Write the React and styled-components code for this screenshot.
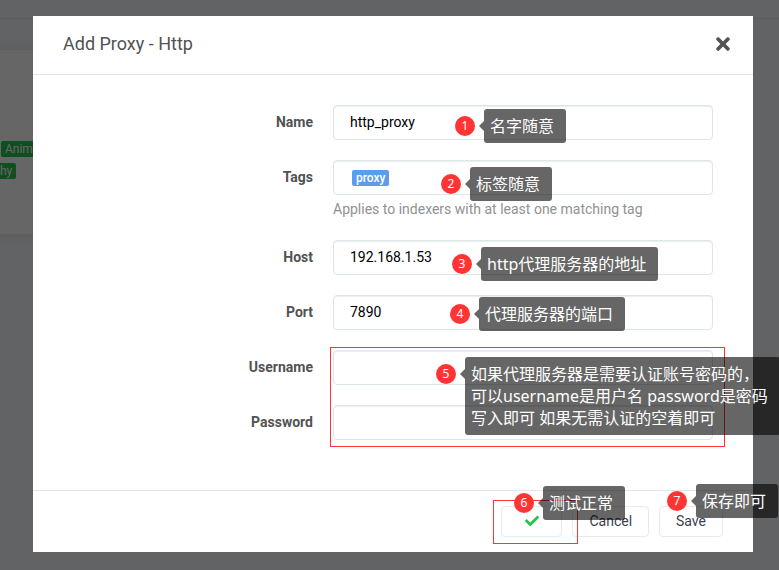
import React from "react";
import styled, { createGlobalStyle } from "styled-components";
import { FaCheck, FaTimes } from "react-icons/fa";

const fields = [
  { id: "name", label: "Name", value: "http_proxy" },
  { id: "tags", label: "Tags", tags: ["proxy"], help: "Applies to indexers with at least one matching tag" },
  { id: "host", label: "Host", value: "192.168.1.53" },
  { id: "port", label: "Port", value: "7890" },
  { id: "username", label: "Username", value: "" },
  { id: "password", label: "Password", value: "", type: "password" },
];

// x / y are measured from the top left corner of the modal
const notes = [
  { x: 422, y: 93, lines: ["名字随意"] },
  { x: 408, y: 151, lines: ["标签随意"] },
  { x: 419, y: 231, lines: ["http代理服务器的地址"] },
  { x: 417, y: 281, lines: ["代理服务器的端口"] },
  {
    x: 403,
    y: 341,
    lines: [
      "如果代理服务器是需要认证账号密码的，",
      "可以username是用户名 password是密码",
      "写入即可 如果无需认证的空着即可",
    ],
  },
  { x: 481, y: 470, lines: ["测试正常"] },
  { x: 634, y: 468, lines: ["保存即可"] },
];

const Field = ({ id, label, value, type = "text", tags, help }) => (
  <FormGroup>
    <Label htmlFor={id}>{label}</Label>
    <Control>
      {tags ? (
        <TagBox>
          {tags.map((tag) => (
            <Tag key={tag}>{tag}</Tag>
          ))}
          <TagInput id={id} type="text" />
        </TagBox>
      ) : (
        <TextInput id={id} type={type} defaultValue={value} />
      )}
      {help && <HelpText>{help}</HelpText>}
    </Control>
  </FormGroup>
);

const Note = ({ number, x, y, lines }) => (
  <NoteWrap $x={x} $y={y}>
    <NoteNumber>{number}</NoteNumber>
    <NoteBubble>
      {lines.map((line) => (
        <div key={line}>{line}</div>
      ))}
    </NoteBubble>
  </NoteWrap>
);

const App = () => {
  return (
    <Page>
      <GlobalStyle />
      <Background aria-hidden="true">
        <Toolbar />
        <IndexerCard>
          <Category>Anime</Category>
          <CategoryEnd>hy</CategoryEnd>
        </IndexerCard>
      </Background>
      <Backdrop>
        <Modal role="dialog" aria-labelledby="modal-title">
          <ModalHeader>
            <Title id="modal-title">Add Proxy - Http</Title>
            <CloseButton type="button" aria-label="Close">
              <FaTimes />
            </CloseButton>
          </ModalHeader>
          <ModalBody>
            {fields.map((field) => (
              <Field key={field.id} {...field} />
            ))}
          </ModalBody>
          <ModalFooter>
            <TestButton type="button" aria-label="Test">
              <FaCheck />
            </TestButton>
            <Button type="button">Cancel</Button>
            <Button type="button">Save</Button>
          </ModalFooter>
          <Outline $x={297} $y={331} $width={395} $height={100} />
          <Outline $x={460} $y={484} $width={85} $height={44} />
          {notes.map((note, index) => (
            <Note key={index} number={index + 1} {...note} />
          ))}
        </Modal>
      </Backdrop>
    </Page>
  );
};

const GlobalStyle = createGlobalStyle`
  * {
    box-sizing: border-box;
  }

  body {
    margin: 0;
    background-color: #f5f7fa;
    color: #515253;
    font-family: Roboto, "Open Sans", sans-serif;
    font-size: 14px;
    line-height: 20px;
  }
`;

const Page = styled.div`
  position: relative;
  min-height: 100vh;
  overflow: hidden;
`;

const Background = styled.div`
  position: absolute;
  inset: 0;
`;

const Toolbar = styled.div`
  height: 19px;
  border-bottom: 1px solid #e5e5e5;
`;

const IndexerCard = styled.div`
  width: 300px;
  height: 184px;
  margin-top: 31px;
  margin-left: -240px;
  padding: 91px 0 0 241px;
  background-color: #fff;
  box-shadow: 0 0 10px 1px #e1e2e3;
`;

const Category = styled.div`
  width: fit-content;
  margin-bottom: 6px;
  padding: 0 4px;
  border-radius: 2px;
  background-color: #27c24c;
  color: #fff;
  font-size: 12px;
  line-height: 16px;
`;

const CategoryEnd = styled(Category)`
  margin-left: -5px;
`;

const Backdrop = styled.div`
  position: relative;
  min-height: 100vh;
  padding: 16px 26px 18px 33px;
  background-color: rgba(0, 0, 0, 0.6);
`;

const Modal = styled.div`
  position: relative;
  background-color: #fff;
`;

const ModalHeader = styled.div`
  display: flex;
  align-items: center;
  justify-content: space-between;
  padding: 14px 20px 16px 30px;
  border-bottom: 1px solid #e5e5e5;
`;

const Title = styled.h1`
  margin: 0;
  font-size: 18px;
  font-weight: 400;
  line-height: 28px;
`;

const CloseButton = styled.button`
  display: flex;
  padding: 0;
  border: 0;
  background: transparent;
  color: #515253;
  font-size: 20px;
`;

const ModalBody = styled.div`
  padding: 30px;
`;

const FormGroup = styled.div`
  display: flex;
  max-width: 650px;
  margin-bottom: 20px;
`;

const Label = styled.label`
  flex: 0 0 250px;
  margin-right: 20px;
  font-weight: 700;
  line-height: 35px;
  text-align: right;
`;

const Control = styled.div`
  flex: 1 1 auto;
  min-width: 0;
`;

const TextInput = styled.input`
  display: block;
  width: 100%;
  height: 35px;
  padding: 6px 16px 8px;
  border: 1px solid #dde6e9;
  border-radius: 4px;
  outline: 0;
  background-color: #fff;
  box-shadow: inset 0 1px 1px rgba(0, 0, 0, 0.075);
  color: #000;
  font-family: inherit;
  font-size: 14px;
`;

const TagBox = styled.div`
  display: flex;
  align-items: center;
  height: 35px;
  padding: 0 16px 0 18px;
  border: 1px solid #dde6e9;
  border-radius: 4px;
  background-color: #fff;
  box-shadow: inset 0 1px 1px rgba(0, 0, 0, 0.075);
`;

const Tag = styled.span`
  padding: 0 4px;
  border-radius: 2px;
  background-color: #5d9cec;
  color: #fff;
  font-size: 12px;
  font-weight: 500;
  line-height: 16px;
`;

const TagInput = styled.input`
  flex: 1 1 auto;
  min-width: 0;
  border: 0;
  outline: 0;
  background: transparent;
`;

const HelpText = styled.div`
  padding: 4px 0 1px;
  color: #909293;
`;

const ModalFooter = styled.div`
  display: flex;
  justify-content: flex-end;
  gap: 10px;
  padding: 15px 30px;
  border-top: 1px solid #e5e5e5;
`;

const Button = styled.button`
  height: 31px;
  padding: 0 16px 2px;
  border: 1px solid #eaeaea;
  border-radius: 4px;
  background-color: #fff;
  color: #3a3f51;
  font-family: inherit;
  font-size: 14px;
`;

const TestButton = styled(Button)`
  display: flex;
  align-items: center;
  justify-content: center;
  width: 61px;
  color: #27c24c;
`;

const Outline = styled.div`
  position: absolute;
  top: ${(props) => props.$y}px;
  left: ${(props) => props.$x}px;
  width: ${(props) => props.$width}px;
  height: ${(props) => props.$height}px;
  border: 1px solid #ff3434;
  pointer-events: none;
`;

const NoteWrap = styled.div`
  position: absolute;
  top: ${(props) => props.$y}px;
  left: ${(props) => props.$x}px;
  display: flex;
  gap: 9px;
  font-family: "Noto Sans", "Noto Sans CJK SC", sans-serif;
  pointer-events: none;
`;

const NoteNumber = styled.div`
  flex: none;
  width: 20px;
  height: 20px;
  margin-top: 7px;
  border-radius: 50%;
  background-color: #ff3434;
  color: #fff;
  font-size: 12px;
  line-height: 20px;
  text-align: center;
`;

const NoteBubble = styled.div`
  position: relative;
  padding: 6px 12px 6px 6px;
  border-radius: 3px;
  background-color: rgba(0, 0, 0, 0.6);
  color: #fff;
  font-size: 16px;
  line-height: 22px;
  white-space: nowrap;

  &::before {
    content: "";
    position: absolute;
    top: 12px;
    right: 100%;
    border: 5px solid transparent;
    border-left-width: 0;
    border-right-color: rgba(0, 0, 0, 0.6);
  }
`;

export default App;
